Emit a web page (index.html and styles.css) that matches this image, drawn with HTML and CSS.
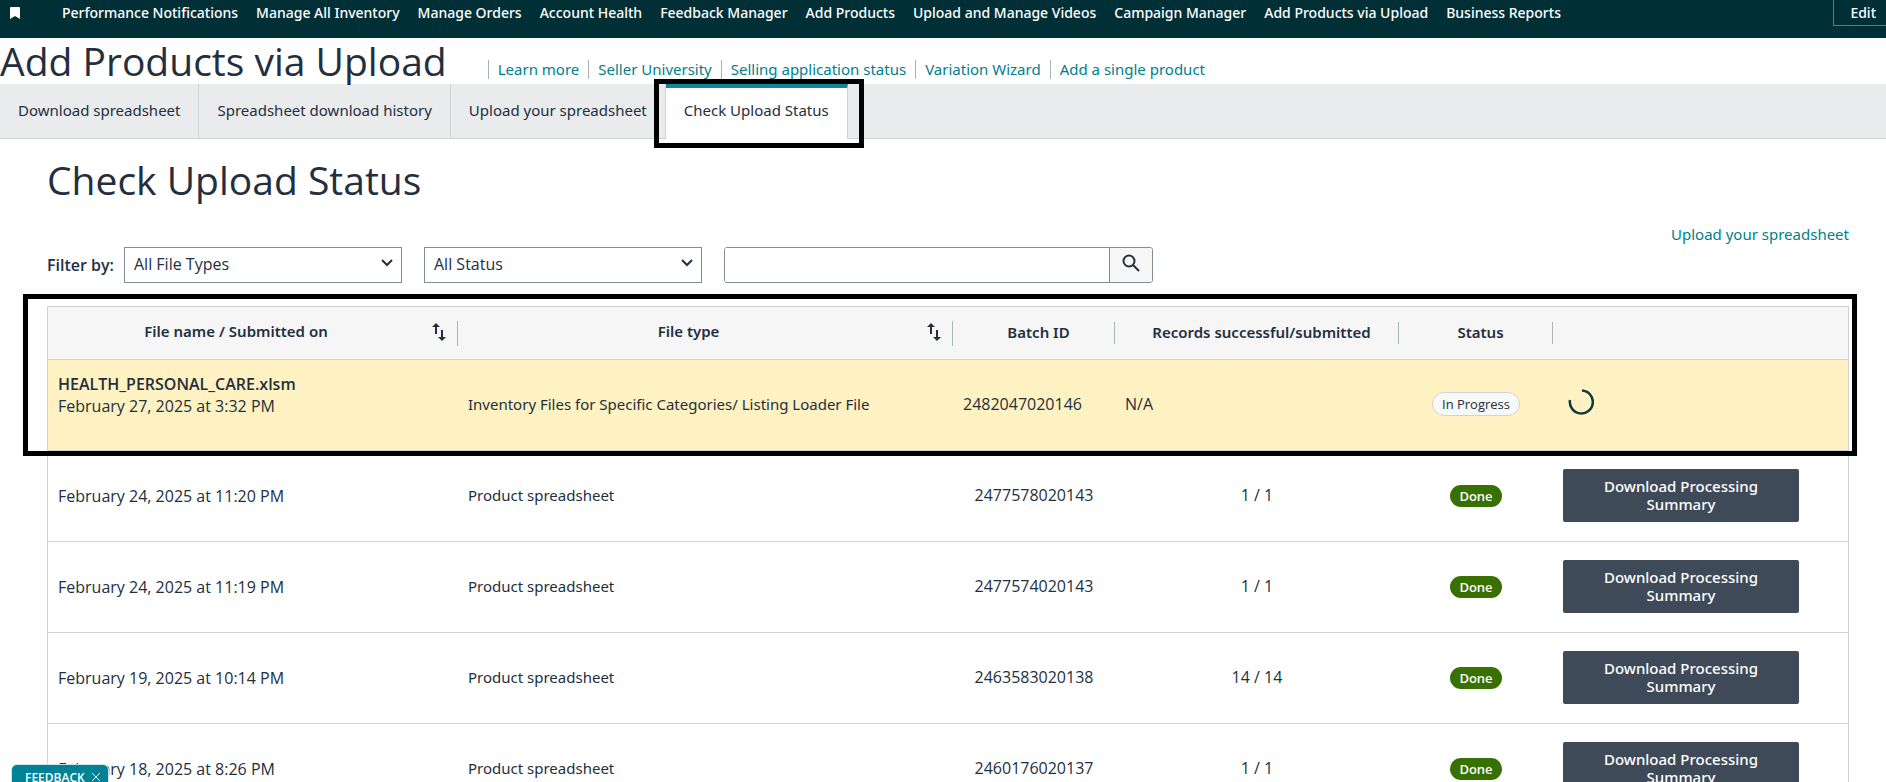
FILE: index.html
```html
<!DOCTYPE html>
<html lang="en">
<head>
<meta charset="utf-8">
<title>Add Products via Upload</title>
<link rel="stylesheet" href="styles.css">
</head>
<body>
<div class="page">
  <nav class="topnav" aria-label="Favorites">
    <svg class="bookmark" viewBox="0 0 10 12" aria-hidden="true"><path d="M0 1a1 1 0 0 1 1-1h8a1 1 0 0 1 1 1v11L5 9 0 12z"/></svg>
    <ul class="topnav-list">
      <li><a href="#">Performance Notifications</a></li>
      <li><a href="#">Manage All Inventory</a></li>
      <li><a href="#">Manage Orders</a></li>
      <li><a href="#">Account Health</a></li>
      <li><a href="#">Feedback Manager</a></li>
      <li><a href="#">Add Products</a></li>
      <li><a href="#">Upload and Manage Videos</a></li>
      <li><a href="#">Campaign Manager</a></li>
      <li><a href="#">Add Products via Upload</a></li>
      <li><a href="#">Business Reports</a></li>
    </ul>
    <button class="edit" type="button">Edit</button>
  </nav>

  <header class="masthead">
    <h1 class="title">Add Products via Upload</h1>
    <ul class="links">
      <li><a href="#">Learn more</a></li>
      <li><a href="#">Seller University</a></li>
      <li><a href="#">Selling application status</a></li>
      <li><a href="#">Variation Wizard</a></li>
      <li><a href="#">Add a single product</a></li>
    </ul>
  </header>

  <nav class="tabs" aria-label="Upload sections">
    <a class="tab" href="#">Download spreadsheet</a>
    <a class="tab" href="#">Spreadsheet download history</a>
    <a class="tab" href="#">Upload your spreadsheet</a>
    <a class="tab tab-active" href="#" aria-current="page">Check Upload Status<span class="mark mark-tab"></span></a>
  </nav>

  <main class="content">
    <h2 class="title">Check Upload Status</h2>
    <div class="upload-line"><a href="#">Upload your spreadsheet</a></div>
    <form class="filters">
      <label class="filter-label" for="types">Filter by:</label>
      <span class="select-box">
        <select id="types"><option>All File Types</option></select>
        <svg viewBox="0 0 12 8" aria-hidden="true"><path d="M1 1l5 5 5-5"/></svg>
      </span>
      <span class="select-box">
        <select id="status" aria-label="Status"><option>All Status</option></select>
        <svg viewBox="0 0 12 8" aria-hidden="true"><path d="M1 1l5 5 5-5"/></svg>
      </span>
      <span class="search">
        <input type="text" aria-label="Search">
        <button type="button" aria-label="Search"><svg viewBox="0 0 18 18" aria-hidden="true"><circle cx="7" cy="7" r="5.5"/><path d="M11 11l6 6"/></svg></button>
      </span>
    </form>

    <div class="table-wrap">
      <table>
        <colgroup><col class="c-name"><col class="c-type"><col class="c-batch"><col class="c-records"><col class="c-status"><col></colgroup>
        <thead>
          <tr>
            <th><div class="head tall"><span>File name / Submitted on</span><svg class="sort" viewBox="0 0 14 18" aria-hidden="true"><path d="M4 11V2M10 7v9"/><path class="tip" d="M0 4l4-4 4 4zM6 14l4 4 4-4z"/></svg></div></th>
            <th><div class="head tall"><span>File type</span><svg class="sort" viewBox="0 0 14 18" aria-hidden="true"><path d="M4 11V2M10 7v9"/><path class="tip" d="M0 4l4-4 4 4zM6 14l4 4 4-4z"/></svg></div></th>
            <th><div class="head"><span>Batch ID</span></div></th>
            <th><div class="head"><span>Records successful/submitted</span></div></th>
            <th><div class="head"><span>Status</span></div></th>
            <th></th>
          </tr>
        </thead>
        <tbody>
          <tr class="progress">
            <td class="first"><strong>HEALTH_PERSONAL_CARE.xlsm</strong><br>February 27, 2025 at 3:32 PM</td>
            <td class="type">Inventory Files for Specific Categories/ Listing Loader File</td>
            <td>2482047020146</td>
            <td>N/A</td>
            <td class="mid"><span class="pill pill-progress">In Progress</span></td>
            <td><svg class="spinner" viewBox="0 0 26 26" role="img" aria-label="Loading"><path d="M2 11A11.500 11.500 0 1 0 14 1.500" stroke-width="2.500"/></svg></td>
          </tr>
          <tr>
            <td class="date">February 24, 2025 at 11:20 PM</td><td class="type">Product spreadsheet</td><td class="mid">2477578020143</td><td class="mid">1 / 1</td>
            <td class="mid"><span class="pill pill-done">Done</span></td><td><button class="download" type="button">Download Processing Summary</button></td>
          </tr>
          <tr>
            <td class="date">February 24, 2025 at 11:19 PM</td><td class="type">Product spreadsheet</td><td class="mid">2477574020143</td><td class="mid">1 / 1</td>
            <td class="mid"><span class="pill pill-done">Done</span></td><td><button class="download" type="button">Download Processing Summary</button></td>
          </tr>
          <tr>
            <td class="date">February 19, 2025 at 10:14 PM</td><td class="type">Product spreadsheet</td><td class="mid">2463583020138</td><td class="mid">14 / 14</td>
            <td class="mid"><span class="pill pill-done">Done</span></td><td><button class="download" type="button">Download Processing Summary</button></td>
          </tr>
          <tr>
            <td class="date">February 18, 2025 at 8:26 PM</td><td class="type">Product spreadsheet</td><td class="mid">2460176020137</td><td class="mid">1 / 1</td>
            <td class="mid"><span class="pill pill-done">Done</span></td><td><button class="download" type="button">Download Processing Summary</button></td>
          </tr>
        </tbody>
      </table>
      <span class="mark mark-row"></span>
    </div>
  </main>

  <button class="feedback" type="button">FEEDBACK <svg viewBox="0 0 10 10" aria-hidden="true"><path d="M1 1l8 8M9 1l-8 8"/></svg></button>
</div>
</body>
</html>
```
FILE: styles.css
```css
* { box-sizing: border-box; }
body {
  margin: 0;
  background: #fff;
  color: #232f3e;
  font: 16px/22px "Open Sans", "Noto Sans", sans-serif;
}
button, input, select { font: inherit; color: inherit; }
a { color: #007f8c; text-decoration: none; }
ul { list-style: none; margin: 0; padding: 0; }
.page { position: relative; height: 100vh; overflow: hidden; }
.topnav, .links, .tabs, .upload-line, th, .type, .download { font-family: "Noto Sans", "Open Sans", sans-serif; font-size: 15px; }

.topnav { display: flex; align-items: flex-start; height: 38px; padding-left: 10px; background: #002f36; color: #fff; }
.bookmark { width: 10px; height: 12px; margin-top: 7px; fill: #fff; }
.topnav-list { display: flex; gap: 18px; margin-left: 42px; padding-top: 2px; font-size: 14px; font-weight: 500; }
.topnav-list a { color: #fff; }
.edit { margin-left: auto; padding: 2px 10px 1px 16px; border: 1px solid #5c7b80; border-width: 0 0 1px 1px; background: none; font-size: 14px; font-weight: 500; }

.masthead { display: flex; align-items: flex-start; gap: 41px; height: 46px; }
.title { margin: 0; font-size: 39px; line-height: 46px; font-weight: 400; white-space: nowrap; }
.links { display: flex; padding-top: 22px; line-height: 19px; }
.links li { padding: 0 9px; border-left: 1px solid #aab2b8; }

.tabs { display: flex; height: 55px; background: #eaebed; border-bottom: 1px solid #d0d3d6; line-height: 52px; }
.tab { padding: 0 18px; color: #232f3e; border-right: 1px solid #d0d3d6; }
.tab-active { position: relative; height: 55px; line-height: 44px; background: #fff; border-top: 4px solid #14849a; }
.mark { position: absolute; border: 5px solid #000; pointer-events: none; }
.mark-tab { top: -9px; bottom: -9px; left: -12px; right: -17px; }

.content { padding: 18px 37px 0 47px; }
.upload-line { display: flex; justify-content: flex-end; margin-top: 20px; }
.filters { display: flex; margin-top: 2px; }
.filter-label { width: 77px; line-height: 36px; font-weight: 600; }
.select-box { position: relative; display: flex; width: 278px; margin-right: 22px; }
.select-box select { appearance: none; width: 100%; height: 36px; padding: 0 9px 2px; border: 1px solid #848c96; border-radius: 0; background: #fff; }
.select-box svg { position: absolute; right: 9px; top: 12px; width: 12px; height: 8px; fill: none; stroke: #232f3e; stroke-width: 2; }
.search { display: flex; width: 429px; height: 36px; border: 1px solid #848c96; border-radius: 3px; overflow: hidden; }
.search input { flex: 1; min-width: 0; border: 0; background: #fff; }
.search button { width: 43px; padding: 0; border: 0; border-left: 1px solid #848c96; background: #f6f6f7; }
.search svg { width: 18px; height: 18px; fill: none; stroke: #232f3e; stroke-width: 2; }

.table-wrap { position: relative; margin-top: 23px; border: 1px solid #d0d3d6; }
table { width: 100%; table-layout: fixed; border-spacing: 0; }
.c-name { width: 410px; }
.c-type { width: 495px; }
.c-batch { width: 162px; }
.c-records { width: 284px; }
.c-status { width: 154px; }
th { height: 53px; padding: 0; background: #f6f6f7; border-bottom: 1px solid #d0d3d6; font-weight: 600; line-height: 20px; }
.head { display: flex; align-items: flex-start; height: 22px; padding-left: 10px; border-right: 1px solid #aab7b8; }
.head.tall { height: 25px; padding: 0 11px 0 0; }
.head span { flex: 1; }
.tall span { padding-right: 8px; }
.sort { width: 14px; height: 18px; margin-top: 2px; fill: none; stroke: #232f3e; stroke-width: 2; }
.sort .tip { fill: #232f3e; stroke: none; }
td { height: 91px; padding: 0 10px 2px; border-bottom: 1px solid #d0d3d6; }
.date { padding-bottom: 0; }
.first { padding-bottom: 20px; }
.first strong { font-weight: 600; }
.progress td { background: #fff2c2; }
.mid { text-align: center; }
.pill { display: inline-block; border-radius: 12px; font-size: 13px; }
.pill-progress { padding: 0 9px; border: 1px solid #d0d3d6; background: #f7f8f8; }
.pill-done { padding: 0 9px; background: #387002; color: #fff; font-weight: 600; }
.spinner { display: block; width: 26px; height: 26px; margin: 0 5px 4px; fill: none; stroke: #0b3a40; }
.download { display: block; width: 236px; padding: 8px 30px 9px; border: 0; border-radius: 2px; background: #3f4a59; color: #fff; font-weight: 500; line-height: 18px; }
.mark-row { top: -13px; left: -25px; right: -9px; height: 162px; }

.feedback { position: absolute; left: 11px; bottom: -9px; padding: 2px 7px 1px 13px; border: 1px solid #d0e4e6; border-radius: 6px 6px 0 0; background: #008296; color: #fff; font-size: 12px; font-weight: 600; }
.feedback svg { width: 10px; height: 10px; margin-left: 3px; fill: none; stroke: #fff; }
```
